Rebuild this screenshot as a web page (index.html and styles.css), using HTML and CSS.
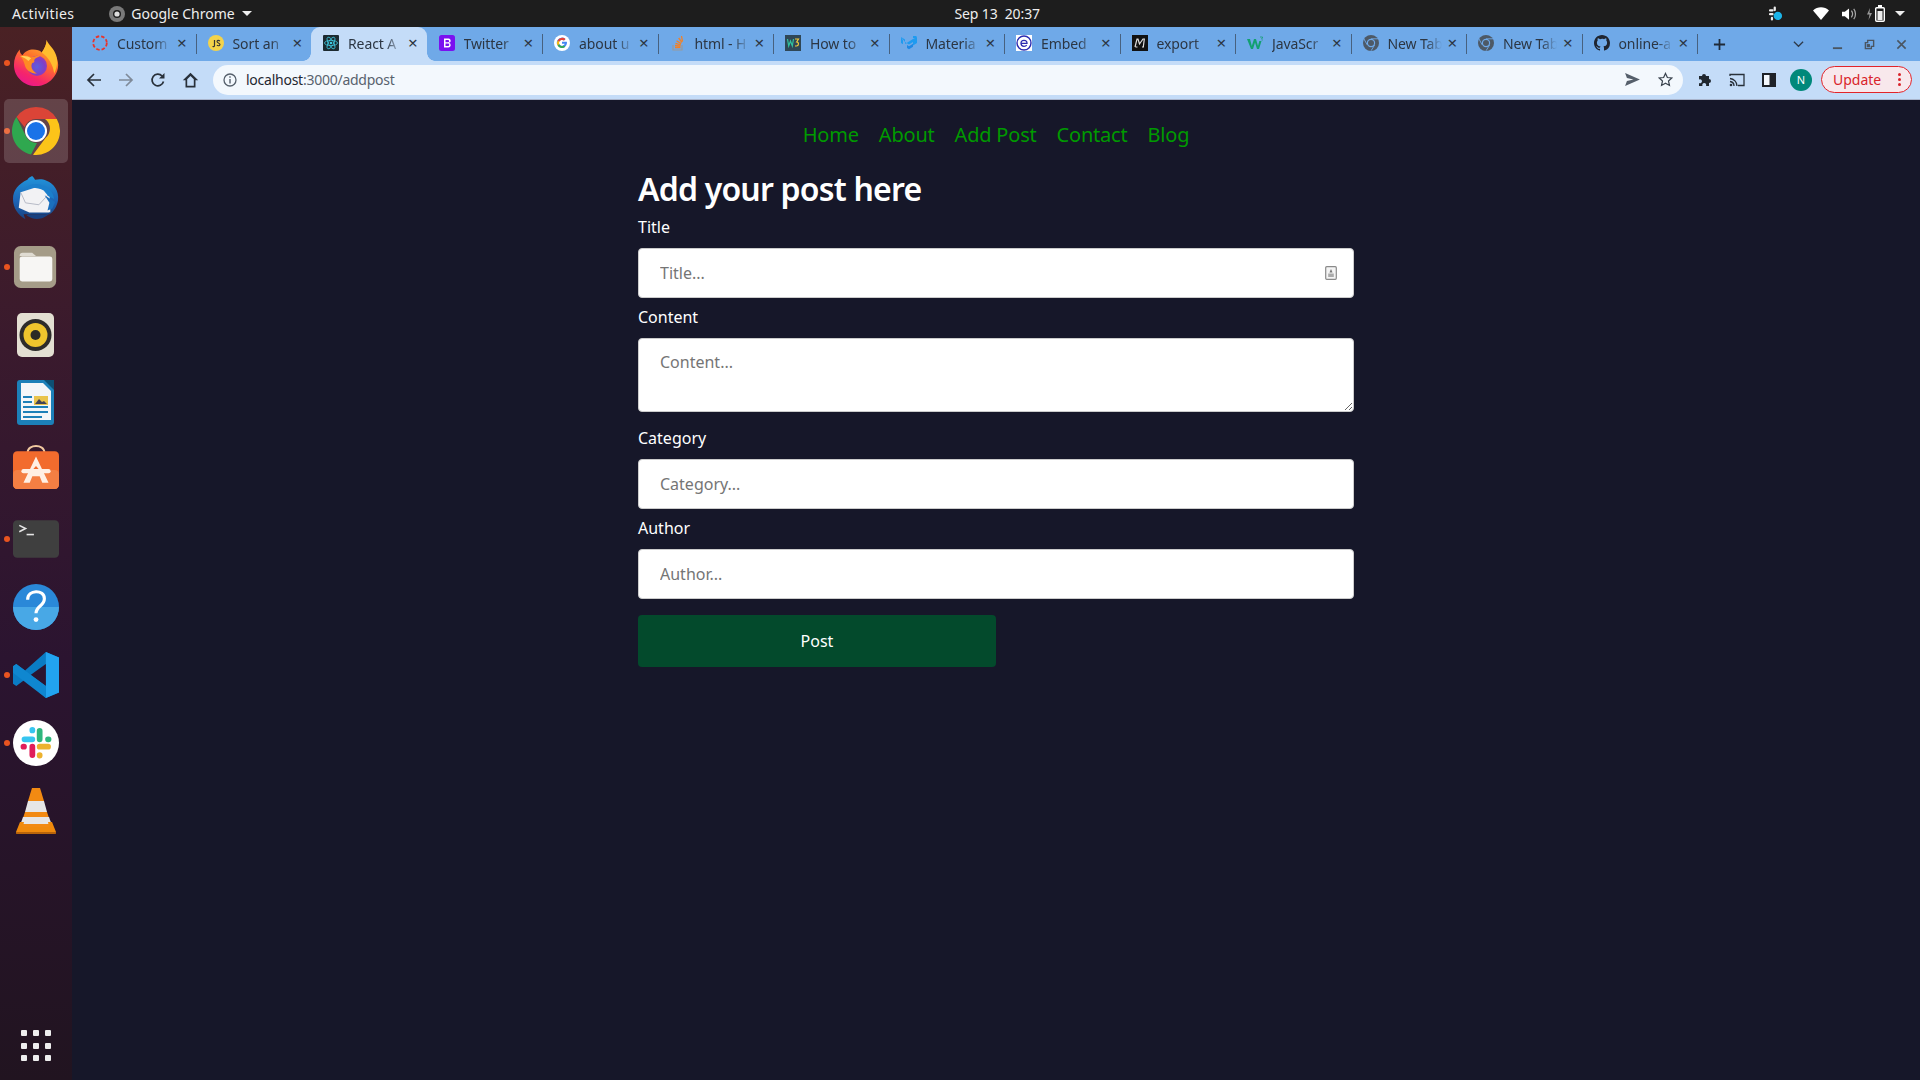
FILE: index.html
```html
<!DOCTYPE html>
<html lang="en">
<head>
<meta charset="utf-8">
<title>React App</title>
<link rel="stylesheet" href="styles.css">
</head>
<body>
<div class="desktop">
  <header class="topbar">
    <div class="top-left">
      <span class="activities">Activities</span>
      <span class="app-menu">
        <svg class="app-icon" viewBox="0 0 16 16"><circle cx="8" cy="8" r="8" fill="#7a7a7a"/><circle cx="8" cy="8" r="4" fill="#1d1d1d"/><circle cx="8" cy="8" r="2.6" fill="#ddd"/></svg>
        Google Chrome
        <i class="caret"></i>
      </span>
    </div>
    <div class="clock">Sep 13&nbsp; 20:37</div>
    <div class="tray">
      <svg class="tray-slack" viewBox="0 0 16 16"><g fill="#eee"><rect x="1" y="3" width="5" height="2.4" rx="1.2"/><rect x="6" y="0" width="2.4" height="5" rx="1.2"/><rect x="1" y="7" width="5" height="2.4" rx="1.2"/><rect x="3" y="11" width="2.4" height="4" rx="1.2"/></g><circle cx="10.5" cy="10" r="4.5" fill="#1cb4e8"/></svg>
      <svg class="tray-wifi" viewBox="0 0 16 14"><path d="M0 3.5C4.500-.8 11.500-.8 16 3.500L8 13z" fill="#fff"/></svg>
      <svg class="tray-vol" viewBox="0 0 16 14"><path d="M0 4.500h3L7.500 1v12L3 9.500H0z" fill="#fff"/><path d="M10 3.500c1.500 2 1.500 5 0 7M12.500 1.500c2.500 3 2.500 8 0 11" fill="none" stroke="#aaa" stroke-width="1.300"/></svg>
      <svg class="tray-bat" viewBox="0 0 20 17"><path d="M4 3 1 9.500h2.500L2.500 15 6 8H3.500z" fill="#999"/><rect x="9.700" y="2.700" width="8.600" height="13.600" rx="1" fill="#1d1d1d" stroke="#fff" stroke-width="1.400"/><rect x="12" y="0" width="4" height="2.500" fill="#fff"/><rect x="11.500" y="6" width="5" height="9" fill="#eee"/></svg>
      <i class="caret tray-caret"></i>
    </div>
  </header>

  <div class="workspace">
    <nav class="dock">
      <div class="dock-apps">
        <div class="dock-item running">
          <svg class="dock-icon" viewBox="0 0 48 48">
            <defs>
              <linearGradient id="ffa" x1="0.8" y1="0" x2="0.3" y2="1"><stop offset="0" stop-color="#ffc62e"/><stop offset=".45" stop-color="#ff6f2c"/><stop offset=".8" stop-color="#f5256b"/><stop offset="1" stop-color="#e9188c"/></linearGradient>
              <radialGradient id="ffb" cx=".5" cy=".55" r=".55"><stop offset="0" stop-color="#5b5fe0"/><stop offset=".7" stop-color="#7f3fc6"/><stop offset="1" stop-color="#a13bb0"/></radialGradient>
            </defs>
            <path d="M35 0c0 6 4 9 8 14 6 8 5 18 0 24-4 6-11 10-19 10C11 48 1 38 1 26 1 20 3 15 7 10c0 3 1 5 3 6 2-4 7-6 11-6 4 0 7 1 9 3 3-4 5-8 5-13z" fill="url(#ffa)"/>
            <path d="M35 0c2 5 8 9 10 16 2 6 1 13-2 19-1-9-6-17-13-22 3-4 5-8 5-13z" fill="#ffbe2e"/>
            <circle cx="25" cy="27" r="10.500" fill="url(#ffb)"/>
            <path d="M7 17c5-2 9-1 12 1 3-1 7-2 9-1-2 1-5 2-6 4 1 1 0 3-2 3-2 4 0 8 5 11-7 0-12-4-13-10-1-3-2-6-5-8z" fill="#ff8a24"/>
            <path d="M8 17c4-1 8 0 11 2l-3 3c-2-2-5-4-8-5z" fill="#ffd25a"/>
          </svg>
        </div>
        <div class="dock-item running active">
          <svg class="dock-icon" viewBox="0 0 48 48">
            <path d="M24 0a24 24 0 0 1 20.800 12H24a12 12 0 0 0-11.400 8.300L4.500 10A24 24 0 0 1 24 0z" fill="#db4437"/>
            <path d="M4.500 10l9.600 19.500A12 12 0 0 0 25 36l-6 11.500A24 24 0 0 1 4.500 10z" fill="#2fa84f"/>
            <path d="M44.800 12A24 24 0 0 1 21 47.800L33.500 31A12 12 0 0 0 33 12z" fill="#fcc419"/>
            <circle cx="24" cy="24" r="11" fill="#fff"/>
            <circle cx="24" cy="24" r="9" fill="#1a73e8"/>
          </svg>
        </div>
        <div class="dock-item">
          <svg class="dock-icon" viewBox="0 0 48 48">
            <defs><linearGradient id="tb" x1="0" y1="0" x2="0" y2="1"><stop offset="0" stop-color="#2196dc"/><stop offset=".6" stop-color="#1d62b4"/><stop offset="1" stop-color="#18437f"/></linearGradient></defs>
            <path d="M20 0c-2 1-4 2-5 4C6 8 0 15 0 24c0 9 5 17 13 21l-2-5H38c5-3 8-9 9-15 1-9-4-17-12-20-4-2-8-2-12-1-1-2-2-3-3-4z" fill="url(#tb)"/>
            <path d="M8 17l22-7 8 8 1 20H17L6 33z" fill="#f2f2f4"/>
            <path d="M8 17l5 11 14 2 11-12" fill="none" stroke="#b4b8c4" stroke-width="1"/>
            <path d="M12 14c5-7 15-7 22-3 5 3 8 7 9 13l-6-3-5-6c-6-3-14-4-20-1z" fill="#1b7fcc"/>
            <path d="M33 20l5 8-2 8 5-2 3-7z" fill="#1b6fbd"/>
            <path d="M14 41c8 6 19 5 26-4l-5 3H16z" fill="#17407f"/>
          </svg>
        </div>
        <div class="dock-item running">
          <svg class="dock-icon" viewBox="0 0 48 48">
            <rect x="1" y="2" width="44" height="44" rx="7" fill="#a59c88"/>
            <rect x="7" y="13" width="34" height="26" rx="2.500" fill="#f7f6f4"/>
            <path d="M7 12a3 3 0 0 1 3-3h10l4 3.500H7z" fill="#e0dcd2"/>
          </svg>
        </div>
        <div class="dock-item">
          <svg class="dock-icon narrow" viewBox="0 0 38 44">
            <rect x="0" y="0" width="37" height="44" rx="5" fill="#e3dfd2"/>
            <circle cx="18.500" cy="22" r="16" fill="#2d2c2a"/>
            <circle cx="18.500" cy="22" r="12" fill="#eec52d"/>
            <circle cx="18.500" cy="22" r="5" fill="#2b2a25"/>
          </svg>
        </div>
        <div class="dock-item">
          <svg class="dock-icon narrow" viewBox="0 0 38 46">
            <path d="M3 0h25l9 9v33a3 3 0 0 1-3 3H3a3 3 0 0 1-3-3V3a3 3 0 0 1 3-3z" fill="#1c80b8"/>
            <path d="M4 3h22l8 8v29H4z" fill="#f3f6f8"/>
            <path d="M27 0h10v10z" fill="#0d4f72"/>
            <path d="M6 16h9v2H6zM6 21h9v2H6zM6 26h25v2H6zM6 31h25v2H6zM6 36h19v2H6z" fill="#1c80b8"/>
            <rect x="17" y="16" width="14" height="9" fill="#e9c44b"/>
            <path d="M18 24l4-5 3 3 2-1 3 3z" fill="#445"/>
          </svg>
        </div>
        <div class="dock-item shift-up">
          <svg class="dock-icon" viewBox="0 0 44 44">
            <path d="M14 7c0-8 16-8 16 0" fill="none" stroke="#f1c9a0" stroke-width="1.800"/>
            <rect x="0" y="6" width="44" height="36" rx="4" fill="#f26b2d"/>
            <rect x="0" y="24" width="44" height="18" rx="4" fill="#f47f43"/>
            <path d="M22 11 10 36h6l2.500-6h7l2.500 6h6z" fill="#fff0e4"/>
            <rect x="8" y="23" width="28" height="4" rx="2" fill="#fff0e4"/>
            <path d="M22 20l-2.500 3h5z" fill="#f26b2d"/>
          </svg>
        </div>
        <div class="dock-item running">
          <svg class="dock-icon" viewBox="0 0 44 36">
            <rect x="0" y="0" width="44" height="36" rx="4" fill="#3f3f3f"/>
            <path d="M6 5l6 3-6 3" fill="none" stroke="#e6e6e6" stroke-width="1.500"/>
            <rect x="13" y="13" width="7" height="1.500" fill="#e6e6e6"/>
          </svg>
        </div>
        <div class="dock-item">
          <svg class="dock-icon" viewBox="0 0 44 44">
            <circle cx="22" cy="22" r="22" fill="#2a88d8"/>
            <path d="M0 22h44a22 22 0 0 1-44 0z" fill="#48a8e6"/>
            <path d="M14 15c0-10 16-10 16-1 0 7-8 7-8 14" fill="none" stroke="#fff" stroke-width="3"/>
            <circle cx="22" cy="34" r="2.300" fill="#fff"/>
          </svg>
        </div>
        <div class="dock-item running">
          <svg class="dock-icon" viewBox="0 0 42 42">
            <path d="M30 0l12 5v32l-12 5-19-17-8 6-3-2V13l3-2 8 6z" fill="#0a7cc4"/>
            <path d="M30 0l12 5v32l-12 5z" fill="#22a4f0"/>
            <path d="M30 11 16 21l14 10z" fill="#2c1430"/>
            <path d="M3 11l27 20v11L0 19v-6z" fill="#0f87d0"/>
          </svg>
        </div>
        <div class="dock-item running">
          <svg class="dock-icon" viewBox="0 0 44 44">
            <circle cx="22" cy="22" r="22" fill="#fff"/>
            <g stroke-width="5.500" stroke-linecap="round" fill="none">
              <path d="M11 18.500h7.500M18.500 9.500v.5" stroke="#36c5f0"/>
              <path d="M25.500 10.500v8M34 18.500h-.5" stroke="#2eb67d"/>
              <path d="M33.500 25.500h-8M25.500 34v-.5" stroke="#ecb22e"/>
              <path d="M18.500 33.500v-8M10 25.500h.5" stroke="#e01e5a"/>
            </g>
          </svg>
        </div>
        <div class="dock-item">
          <svg class="dock-icon vlc" viewBox="0 0 42 46">
            <path d="M17 0h8l4 13H13z" fill="#f28a12"/>
            <path d="M13 13h16l3 11H10z" fill="#e6e6e6"/>
            <path d="M10 24h22l2 6H8z" fill="#f28a12"/>
            <path d="M8 29h26l2.500 7h-31z" fill="#e6e6e6"/>
            <path d="M6 36h30l1 3H5z" fill="#f28a12"/>
            <path d="M5 34h4l-1 5h26l-1-5h4l4 10a1 1 0 0 1-1 1H2a1 1 0 0 1-1-1z" fill="#f08a0c"/>
            <path d="M1.500 44h39l.5 2H1z" fill="#b9640a"/>
          </svg>
        </div>
      </div>
      <div class="app-grid"><i></i><i></i><i></i><i></i><i></i><i></i><i></i><i></i><i></i></div>
    </nav>

    <div class="browser">
      <div class="tabstrip">
        <div class="tab">
          <svg class="fav" viewBox="0 0 16 16"><circle cx="8" cy="8" r="6.800" fill="none" stroke="#e8332a" stroke-width="1.800" stroke-dasharray="3.500 2"/></svg>
          <span class="tab-title">Custom</span><span class="tab-x">×</span>
        </div>
        <div class="tab">
          <svg class="fav" viewBox="0 0 16 16"><circle cx="8" cy="8" r="8" fill="#f3d34a"/><path d="M6.500 5v5.500q0 1.500-2 1" fill="none" stroke="#333" stroke-width="1.200"/><path d="M12 6q-2.500-1.500-3 .500c0 1.800 3 1 3 3q-.5 2-3.200.8" fill="none" stroke="#333" stroke-width="1.100"/></svg>
          <span class="tab-title">Sort an</span><span class="tab-x">×</span>
        </div>
        <div class="tab active">
          <svg class="fav" viewBox="0 0 16 16"><rect width="16" height="16" rx="1" fill="#1c2a30"/><g fill="none" stroke="#3fc8e0" stroke-width=".8"><ellipse cx="8" cy="8" rx="6.500" ry="2.600"/><ellipse cx="8" cy="8" rx="6.500" ry="2.600" transform="rotate(60 8 8)"/><ellipse cx="8" cy="8" rx="6.500" ry="2.600" transform="rotate(120 8 8)"/></g><circle cx="8" cy="8" r="1.300" fill="#3fc8e0"/></svg>
          <span class="tab-title">React A</span><span class="tab-x">×</span>
        </div>
        <div class="tab">
          <svg class="fav" viewBox="0 0 16 16"><rect width="16" height="16" rx="2.500" fill="#7a11f0"/><path d="M5 3.500h4a2.200 2.200 0 0 1 1 4.300 2.400 2.400 0 0 1-.6 4.700H5zM6.500 5v2.300H9a1.150 1.150 0 0 0 0-2.300zM6.500 8.500V11H9a1.250 1.250 0 0 0 0-2.500z" fill="#fff" fill-rule="evenodd"/></svg>
          <span class="tab-title">Twitter</span><span class="tab-x">×</span>
        </div>
        <div class="tab">
          <svg class="fav" viewBox="0 0 16 16"><circle cx="8" cy="8" r="8" fill="#fff"/><path d="M12.800 6.800H8v2h2.800a3 3 0 1 1-.8-3.200l1.500-1.500A5.100 5.100 0 1 0 13 8a5 5 0 0 0-.2-1.200z" fill="#4285f4"/><path d="M3.600 5.500 5.300 6.800A3 3 0 0 1 10 5.600l1.500-1.500A5.100 5.100 0 0 0 3.600 5.500z" fill="#ea4335"/><path d="M3.600 5.500a5.100 5.100 0 0 0 0 5l1.700-1.300a3 3 0 0 1 0-2.400z" fill="#fbbc05"/><path d="M3.600 10.500a5.100 5.100 0 0 0 7.800 1.300L9.800 10.500a3 3 0 0 1-4.500-1.300z" fill="#34a853"/></svg>
          <span class="tab-title">about u</span><span class="tab-x">×</span>
        </div>
        <div class="tab">
          <svg class="fav" viewBox="0 0 16 16"><path d="M3 10v5h9v-5" fill="none" stroke="#999" stroke-width="1.200"/><path d="M5 12.500h5.500M5 10.500l5.500.6M5.500 8.300l5.300 1.500M6.500 5.700l4.700 2.900M8.700 3l3.200 4.400M11.500 1l1 5.500" stroke="#f48024" stroke-width="1.300" fill="none"/></svg>
          <span class="tab-title">html - H</span><span class="tab-x">×</span>
        </div>
        <div class="tab">
          <svg class="fav" viewBox="0 0 16 16"><rect width="16" height="16" fill="#2f4756"/><path d="M2.500 4l1.200 7 1.800-5 1.800 5 1.200-7" fill="none" stroke="#30c3a0" stroke-width="1.200"/><path d="M10 4h3.500l-1.800 3c2.500 0 2.200 4-.2 4H10" fill="none" stroke="#f0c93a" stroke-width="1.200"/></svg>
          <span class="tab-title">How to</span><span class="tab-x">×</span>
        </div>
        <div class="tab">
          <svg class="fav" viewBox="0 0 16 16"><path d="M0 2l4 2.400V9L8 6.500 12 4v3l-4 2.500-4-2.500zM0 2v6l2 1.200V5.500zM12 4l4-2v6l-4 2.500z" fill="#1e9bf0"/><path d="M6 10l2 1.200 4-2.400v3L8 14.300 6 13z" fill="#1e88e5"/><rect x="12" y="1" width="3.500" height="2" fill="#1e9bf0"/></svg>
          <span class="tab-title">Materia</span><span class="tab-x">×</span>
        </div>
        <div class="tab">
          <svg class="fav" viewBox="0 0 16 16"><rect width="16" height="16" fill="#fff"/><circle cx="8" cy="8" r="7" fill="none" stroke="#2b2bb0" stroke-width="1.400"/><path d="M5 8.300h6q0-3-3-3t-3 3q0 3 3 3 2 0 2.700-1.300" fill="none" stroke="#2b2bb0" stroke-width="1.300"/></svg>
          <span class="tab-title">Embed</span><span class="tab-x">×</span>
        </div>
        <div class="tab">
          <svg class="fav" viewBox="0 0 16 16"><rect width="16" height="16" fill="#111"/><path d="M3 12 5 4h1l1.500 5L11 4h1.300l-1 8M3.500 12h2M10 12h2" fill="none" stroke="#ddd" stroke-width="1.200"/></svg>
          <span class="tab-title">export</span><span class="tab-x">×</span>
        </div>
        <div class="tab">
          <svg class="fav" viewBox="0 0 16 16"><path d="M0 4h3l1.800 7L7 4h2l2 7 1.300-5h2.200L12 14h-2L8 7.500 6 14H4z" fill="#12a070"/><path d="M13 2h2.500v1l-1 1q1.200.5.600 1.500" fill="none" stroke="#12a070" stroke-width=".8"/></svg>
          <span class="tab-title">JavaScr</span><span class="tab-x">×</span>
        </div>
        <div class="tab">
          <svg class="fav" viewBox="0 0 16 16"><circle cx="8" cy="8" r="8" fill="#4d5966"/><circle cx="8" cy="8" r="4.200" fill="#6fa9e8"/><circle cx="8" cy="8" r="3" fill="#4d5966"/><path d="M8 3.800h7M4.300 10 1 4M11.600 10 8 15.800" stroke="#6fa9e8" stroke-width=".9"/></svg>
          <span class="tab-title">New Tab</span><span class="tab-x">×</span>
        </div>
        <div class="tab">
          <svg class="fav" viewBox="0 0 16 16"><circle cx="8" cy="8" r="8" fill="#4d5966"/><circle cx="8" cy="8" r="4.200" fill="#6fa9e8"/><circle cx="8" cy="8" r="3" fill="#4d5966"/><path d="M8 3.800h7M4.300 10 1 4M11.600 10 8 15.800" stroke="#6fa9e8" stroke-width=".9"/></svg>
          <span class="tab-title">New Tab</span><span class="tab-x">×</span>
        </div>
        <div class="tab">
          <svg class="fav" viewBox="0 0 16 16"><path fill="#1f2530" d="M8 0C3.580 0 0 3.580 0 8c0 3.540 2.290 6.530 5.470 7.590.4.070.55-.17.55-.38v-1.340c-2.230.48-2.700-1.070-2.700-1.070-.36-.93-.89-1.170-.89-1.170-.73-.5.050-.49.050-.49.800.06 1.220.82 1.220.82.710 1.220 1.870.87 2.330.66.070-.52.280-.87.510-1.070-1.780-.2-3.640-.89-3.640-3.950 0-.87.310-1.590.82-2.150-.08-.2-.36-1.020.08-2.120 0 0 .67-.21 2.200.82A7.600 7.600 0 0 1 8 3.870c.68 0 1.360.09 2 .27 1.530-1.040 2.200-.82 2.200-.82.44 1.100.16 1.920.08 2.120.51.560.82 1.270.82 2.150 0 3.070-1.870 3.750-3.650 3.950.29.250.54.730.54 1.480v2.190c0 .21.150.46.550.38A8 8 0 0 0 16 8c0-4.420-3.580-8-8-8z"/></svg>
          <span class="tab-title">online-a</span><span class="tab-x">×</span>
        </div>
        <button class="new-tab" type="button">
          <svg viewBox="0 0 14 14"><path d="M7 1v12M1 7h12" stroke="#1f2a38" stroke-width="1.900"/></svg>
        </button>
        <div class="window-ctrls">
          <svg class="tab-search" viewBox="0 0 12 8"><path d="M1 1.500l5 5 5-5" fill="none" stroke="#2f3b4a" stroke-width="1.400"/></svg>
          <svg class="win" viewBox="0 0 12 12"><rect x="1" y="9" width="10" height="2" fill="#4a5561"/></svg>
          <svg class="win" viewBox="0 0 12 12"><path d="M4 1.500h6.500V8H8v2.500H1.500V4H4z" fill="none" stroke="#4a5561" stroke-width="1.500"/><rect x="3" y="5.500" width="3.500" height="3.500" fill="#4a5561"/></svg>
          <svg class="win" viewBox="0 0 12 12"><path d="M1.500 1.500l9 9M10.500 1.500l-9 9" stroke="#4a5561" stroke-width="1.700"/></svg>
        </div>
      </div>

      <div class="toolbar">
        <svg class="tool" viewBox="0 0 16 16"><path d="M15 8H2M8 2 2 8l6 6" fill="none" stroke="#28303a" stroke-width="1.700"/></svg>
        <svg class="tool" viewBox="0 0 16 16"><path d="M1 8h13M8 2l6 6-6 6" fill="none" stroke="#7f8a99" stroke-width="1.700"/></svg>
        <svg class="tool" viewBox="0 0 16 16"><path d="M13.500 9.500a5.800 5.800 0 1 1-1.400-5.500" fill="none" stroke="#28303a" stroke-width="1.700"/><path d="M14.500 1v5.500H9z" fill="#28303a"/></svg>
        <svg class="tool" viewBox="0 0 16 16"><path d="M8 .8 .3 8.300H3V15.500h10V8.300h2.700zM4.700 13.800V7.300L8 4l3.300 3.300v6.500z" fill="#28303a" fill-rule="evenodd"/></svg>
        <div class="omnibox">
          <svg class="info" viewBox="0 0 14 14"><circle cx="7" cy="7" r="6" fill="none" stroke="#555f6b" stroke-width="1.300"/><path d="M7 6v4.500M7 3.200v1.600" stroke="#555f6b" stroke-width="1.400"/></svg>
          <span class="url">localhost<span class="url-dim">:3000/addpost</span></span>
          <svg class="omni-send" viewBox="0 0 16 14"><path d="M0 0l16 7L0 14l2-5.500L9 7 2 5.500z" fill="#555f6b"/></svg>
          <svg class="omni-star" viewBox="0 0 16 16"><path d="M8 1.500l2 4.400 4.700.5-3.500 3.200 1 4.700L8 11.900l-4.200 2.400 1-4.700L1.300 6.400 6 5.900z" fill="none" stroke="#3a434e" stroke-width="1.300"/></svg>
        </div>
        <svg class="tool ext" viewBox="0 0 16 16"><path d="M2 4h3a2 2 0 1 1 4 0h3v3a2 2 0 1 1 0 4v3H9a2 2 0 1 0-3.500 0H2v-3a2 2 0 1 0 0-3.500z" fill="#20272f"/></svg>
        <svg class="tool cast" viewBox="0 0 16 14"><path d="M1 3V1.500h14v11H9M1 5.500a7.500 7.500 0 0 1 7 7.500M1 8.500a4.500 4.500 0 0 1 4 4.500" fill="none" stroke="#28303a" stroke-width="1.300"/><circle cx="2" cy="12" r="1.300" fill="#28303a"/></svg>
        <svg class="tool side" viewBox="0 0 14 14"><rect width="14" height="14" fill="#1e2228"/><rect x="2" y="2" width="5.500" height="10" fill="#f4f8fd"/></svg>
        <span class="avatar">N</span>
        <div class="update">Update <span class="update-dots"><i></i><i></i><i></i></span></div>
      </div>

      <main class="page">
        <nav class="site-nav">
          <a href="#">Home</a>
          <a href="#">About</a>
          <a href="#">Add Post</a>
          <a href="#">Contact</a>
          <a href="#">Blog</a>
        </nav>
        <form class="post-form">
          <h1>Add your post here</h1>
          <label class="field">
            <span>Title</span>
            <span class="input-wrap">
              <input type="text" placeholder="Title...">
              <svg class="pw-icon" viewBox="0 0 12 14"><rect x=".7" y=".7" width="10.600" height="12.600" rx="1" fill="#f4f4f4" stroke="#8a8a8a" stroke-width="1.200"/><path d="M6 3 4.500 6.500h3z" fill="#777"/><rect x="3.200" y="7.500" width="5.600" height="3.500" fill="#aaa"/></svg>
            </span>
          </label>
          <label class="field text-field">
            <span>Content</span>
            <textarea placeholder="Content..."></textarea>
          </label>
          <label class="field">
            <span>Category</span>
            <input type="text" placeholder="Category...">
          </label>
          <label class="field">
            <span>Author</span>
            <input type="text" placeholder="Author...">
          </label>
          <button class="submit" type="button">Post</button>
        </form>
      </main>
    </div>
  </div>
</div>
</body>
</html>
```
FILE: styles.css
```css
* { box-sizing: border-box; }
html, body { margin: 0; height: 100%; overflow: hidden; }
body { font-family: "Noto Sans", "Open Sans", sans-serif; background: #161729; }

.desktop { width: 1920px; height: 1080px; display: flex; flex-direction: column; }

/* GNOME top bar */
.topbar { height: 27px; flex: none; background: #1d1d1d; color: #eee; font-size: 14px; display: grid; grid-template-columns: 1fr auto 880px; align-items: center; padding: 0 0 0 12px; }
.top-left { display: flex; align-items: center; gap: 35px; }
.activities { letter-spacing: .4px; }
.app-menu { display: flex; align-items: center; gap: 6px; }
.app-icon { width: 16px; height: 16px; }
.caret { display: inline-block; width: 0; height: 0; border-left: 5px solid transparent; border-right: 5px solid transparent; border-top: 5px solid #eee; margin-left: 1px; }
.clock { letter-spacing: -0.1px; }
.tray { display: flex; align-items: center; justify-content: flex-end; }
.tray-slack { width: 15px; height: 16px; margin-right: 30px; }
.tray-wifi { width: 16px; height: 14px; margin-right: 13px; }
.tray-vol { width: 15px; height: 14px; margin-right: 9px; }
.tray-bat { width: 20px; height: 17px; margin-right: 9px; }
.tray-caret { margin: 0 15px 0 0; }

.workspace { flex: 1; display: flex; min-height: 0; }

/* Ubuntu dock */
.dock { width: 72px; flex: none; background: linear-gradient(180deg, #4a2124 0%, #3a1a2d 30%, #2b1430 60%, #211420 100%); display: flex; flex-direction: column; justify-content: space-between; padding: 2px 0 19px; }
.dock-apps { display: flex; flex-direction: column; }
.dock-item { height: 68px; display: flex; align-items: center; justify-content: center; position: relative; }
.dock-item.running::before { content: ""; position: absolute; left: 4px; top: 31px; width: 6px; height: 6px; border-radius: 50%; background: #e95420; }
.dock-item.active::after { content: ""; position: absolute; left: 4px; right: 4px; top: 2px; bottom: 2px; border-radius: 5px; background: rgba(255,255,255,.16); }
.dock-icon { width: 46px; height: 46px; position: relative; z-index: 1; }
.dock-icon.narrow { width: 38px; height: 46px; }
.dock-icon.vlc { width: 42px; height: 46px; }
.dock-item.shift-up { align-items: flex-start; padding-top: 8px; }
.dock-item.active .dock-icon { width: 48px; height: 48px; }
.app-grid { display: grid; grid-template-columns: repeat(3, 6px); gap: 6.500px 6px; justify-content: center; }
.app-grid i { height: 6px; border-radius: 1px; background: #eee; }

/* Chrome */
.browser { flex: 1; display: flex; flex-direction: column; min-width: 0; }
.tabstrip { height: 34px; flex: none; background: #6fa9e8; display: flex; align-items: flex-end; padding-left: 8px; font-size: 14px; color: #2c3643; }
.tab { width: 115.500px; height: 34px; display: flex; align-items: center; padding: 0 12px 2px; position: relative; flex: none; }
.tab + .tab::before { content: ""; position: absolute; left: 0; top: 7px; height: 20px; width: 1px; background: #47617f; }
.tab.active { background: #c4dcf8; border-radius: 9px 9px 0 0; }
.tab.active::before, .tab.active + .tab::before { display: none; }
.tab.active::before { display: block; left: -8px; top: auto; bottom: 0; width: 8px; height: 8px; background: radial-gradient(circle at 0 0, transparent 7.500px, #c4dcf8 8px); }
.tab.active::after { content: ""; position: absolute; right: -8px; bottom: 0; width: 8px; height: 8px; background: radial-gradient(circle at 100% 0, transparent 7.500px, #c4dcf8 8px); }
.fav { width: 16px; height: 16px; flex: none; margin-right: 9px; }
.tab-title { width: 54px; white-space: nowrap; overflow: hidden; flex: none; -webkit-mask-image: linear-gradient(90deg, #000 70%, transparent 100%); mask-image: linear-gradient(90deg, #000 70%, transparent 100%); letter-spacing: -0.1px; }
.tab-x { margin-left: 6px; font-size: 17px; line-height: 16px; width: 12px; text-align: center; color: #2c3643; }
.new-tab { width: 42px; height: 34px; border: 0; background: none; padding: 0 0 0 3px; display: flex; align-items: center; justify-content: center; position: relative; }
.new-tab::before { content: ""; position: absolute; left: 0; top: 7px; height: 20px; width: 1px; background: #47617f; }
.new-tab svg { width: 13px; height: 13px; }
.window-ctrls { flex: 1; display: flex; align-items: center; justify-content: flex-end; height: 34px; padding-right: 13px; }
.tab-search { width: 11px; height: 8px; margin-right: 28px; }
.win { width: 11px; height: 11px; margin-left: 21px; }
.tab-search + .win { margin-left: 0; }

.toolbar { height: 39px; flex: none; background: #c4dcf8; border-bottom: 1px solid #a9b4cb; display: flex; align-items: center; padding: 0 10px 1px 14px; }
.tool { width: 16px; height: 16px; margin-right: 16px; flex: none; }
.toolbar > .tool:nth-child(4) { width: 17px; margin-right: 14px; }
.omnibox { width: 1470px; height: 30px; border-radius: 15px; background: #f3f8fd; display: flex; align-items: center; padding: 0 10px 0 10px; flex: none; }
.info { width: 14px; height: 14px; margin-right: 9px; flex: none; }
.url { flex: 1; font-size: 14px; color: #1f2730; letter-spacing: -0.25px; }
.url-dim { color: #58626e; }
.omni-send { width: 15px; height: 13px; margin-right: 18px; }
.omni-star { width: 15px; height: 15px; }
.tool.ext { margin: 0 16px 0 14px; }
.tool.cast { height: 14px; margin-right: 17px; }
.tool.side { width: 14px; height: 14px; margin-right: 14px; }
.avatar { width: 22px; height: 22px; border-radius: 50%; background: #01887a; color: #fff; font-size: 11px; display: flex; align-items: center; justify-content: center; flex: none; margin-right: 9px; }
.update { width: 91px; height: 27px; border: 1px solid #e2242a; border-radius: 14px; background: #f8e8ec; color: #d9232a; font-size: 14px; display: flex; align-items: center; padding-left: 11px; flex: none; }
.update-dots { display: flex; flex-direction: column; gap: 2px; margin-left: auto; margin-right: 10px; }
.update-dots i { width: 3px; height: 3px; border-radius: 50%; background: #d9232a; }

/* Page */
.page { flex: 1; background: #161729; padding-top: 21px; min-height: 0; }
.site-nav { display: flex; justify-content: center; gap: 20px; font-size: 20px; line-height: 28px; letter-spacing: -0.2px; }
.site-nav a { color: #009a00; text-decoration: none; }
.post-form { width: 716px; margin: 19px 0 0 566px; color: #fff; }
.post-form h1 { font-size: 32px; font-weight: 600; line-height: 42px; letter-spacing: -0.8px; margin: 0 0 5px; }
.field { display: block; font-size: 16px; margin-bottom: 7px; }
.field.text-field { margin-bottom: 14px; }
.field > span:first-child { display: block; line-height: 24px; margin-bottom: 9px; }
.input-wrap { display: block; position: relative; }
.pw-icon { position: absolute; right: 17px; top: 18px; width: 12px; height: 14px; }
.field input, .field textarea { display: block; width: 100%; height: 50px; border: 1px solid #ccc; border-radius: 4px; background: #fff; padding: 0 21px; font: inherit; color: #222; outline: 0; }
.field textarea { height: 74px; padding-top: 12px; resize: vertical; }
.field input::placeholder, .field textarea::placeholder { color: #757575; opacity: 1; }
.submit { display: block; width: 358px; height: 52px; margin-top: 16px; border: 0; border-radius: 4px; background: #034a2c; color: #fff; font: inherit; font-size: 16px; }
```
